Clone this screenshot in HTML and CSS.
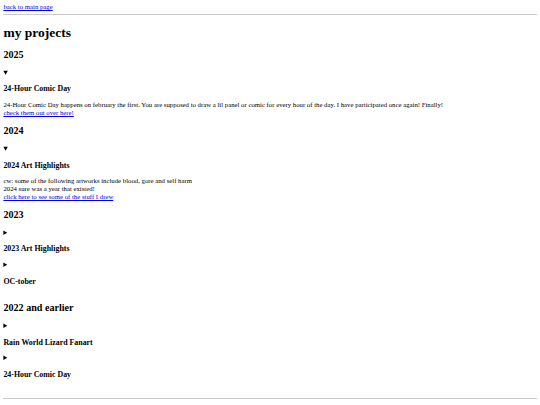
FILE: index.html
```html
<!DOCTYPE html>
<html lang="en">
<head>
  <meta charset="UTF-8">
  <meta name="viewport" content="width=device-width, initial-scale=1.0">
  <title>my projects</title>
  <link rel="stylesheet" href="styles.css">
</head>
<body>
  <a href="#">back to main page</a>
  <hr>
  <h1>my projects</h1>

  <h2>2025</h2>
  <details open>
    <summary><h3>24-Hour Comic Day</h3></summary>
    <p>24-Hour Comic Day happens on february the first. You are supposed to draw a lil panel or comic for every hour of the day. I have participated once again! Finally!<br>
    <a href="#">check them out over here!</a></p>
  </details>

  <h2>2024</h2>
  <details open>
    <summary><h3>2024 Art Highlights</h3></summary>
    <p>cw: some of the following artworks include blood, gore and self harm<br>
    2024 sure was a year that existed!<br>
    <a href="#">click here to see some of the stuff I drew</a></p>
  </details>

  <h2>2023</h2>
  <details>
    <summary><h3>2023 Art Highlights</h3></summary>
  </details>
  <details>
    <summary><h3>OC-tober</h3></summary>
  </details>

  <h2>2022 and earlier</h2>
  <details>
    <summary><h3>Rain World Lizard Fanart</h3></summary>
  </details>
  <details>
    <summary><h3>24-Hour Comic Day</h3></summary>
  </details>

  <hr class="footer-line">
  <p class="footer">made by me</p>
</body>
</html>
```

FILE: styles.css
```css
body {
  font-family: "Liberation Serif", "Times New Roman", serif;
  font-size: 6.75px;
  line-height: 1.14;
  margin: 3.4px;
  color: #000;
}

a {
  color: #0000ee;
}

hr {
  border: none;
  border-top: 1px solid #c8c8c8;
  margin: 3.4px 0;
}

h1 {
  font-size: 2em;
  margin: 0.67em 0;
}

h2 {
  font-size: 1.5em;
  margin: 0.83em 0;
}

h3 {
  font-size: 1.17em;
  margin: 1em 0;
}

p {
  margin: 1em 0;
}

summary {
  cursor: pointer;
}

.footer-line {
  margin-top: 11px;
}
```
